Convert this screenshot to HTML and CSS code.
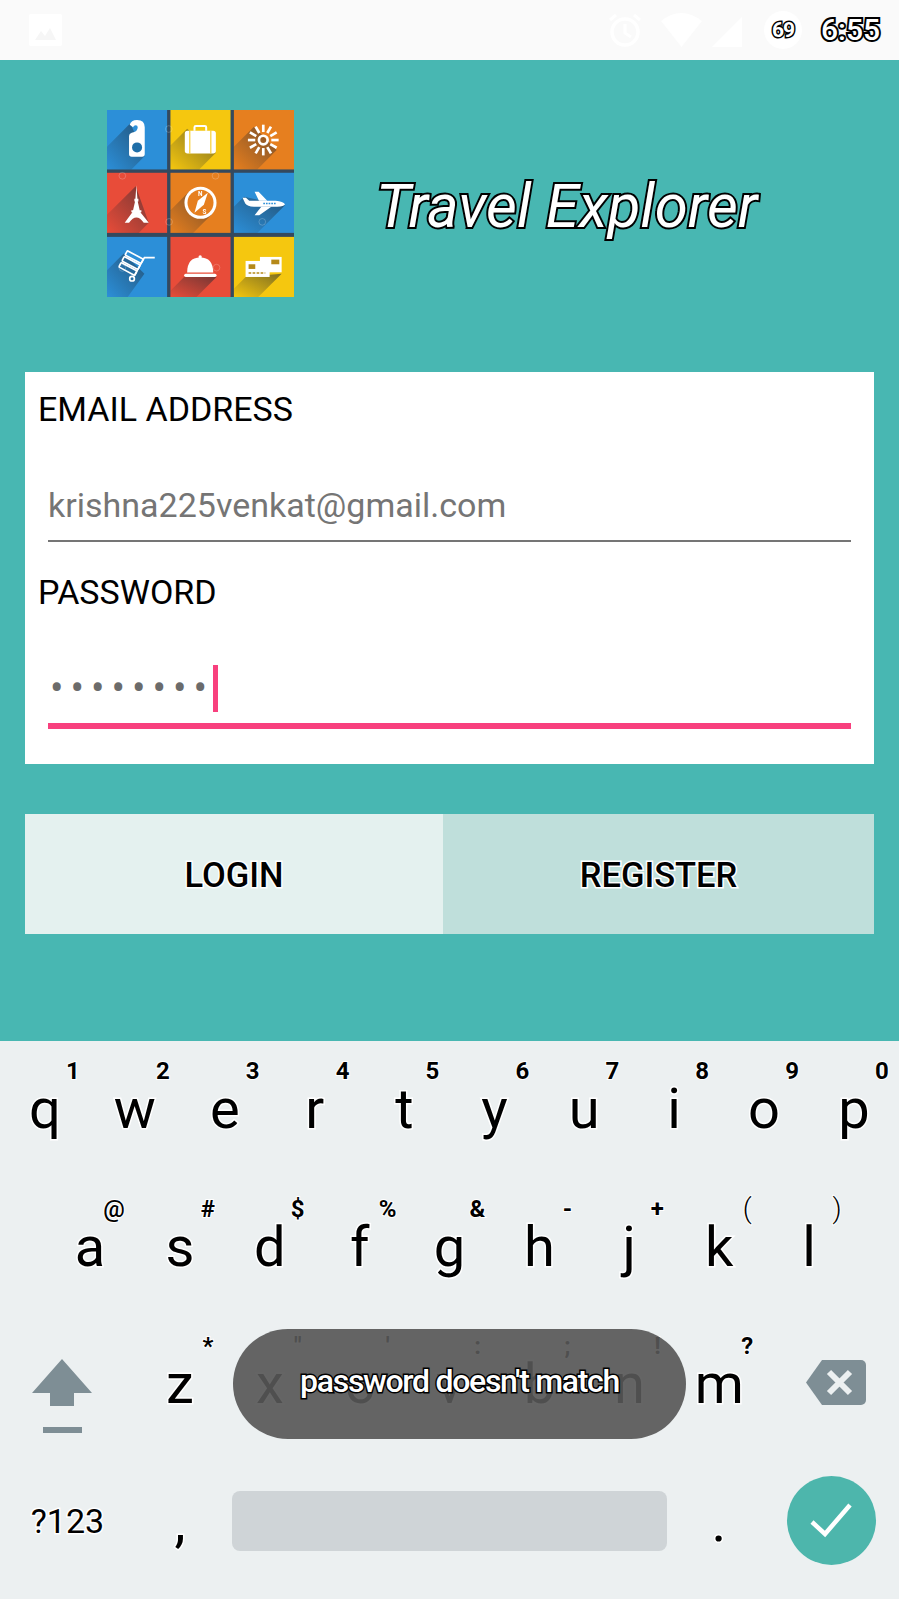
FILE: index.html
```html
<!DOCTYPE html>
<html lang="en">
<head>
<meta charset="utf-8">
<title>Travel Explorer</title>
<link rel="stylesheet" href="styles.css">
</head>
<body>
<div class="screen">
  <header class="status">
    <svg class="st-image" viewBox="0 0 33 32"><path fill="#fff" d="M2 0h29a2 2 0 0 1 2 2v28a2 2 0 0 1-2 2H2a2 2 0 0 1-2-2V2a2 2 0 0 1 2-2z"/><path fill="#f6f6f6" d="M6 26l6-9 4 5 5-8 6 12z"/></svg>
    <div class="st-right">
      <svg class="st-alarm" viewBox="0 0 36 36"><circle cx="18" cy="20" r="13" fill="none" stroke="#fff" stroke-width="3.5"/><path d="M18 12v9l6 4M3 8l6-5M33 8l-6-5" fill="none" stroke="#fff" stroke-width="3"/></svg>
      <svg class="st-wifi" viewBox="0 0 41 34"><path fill="#fff" d="M0 8Q20-8 41 8L20.500 34z"/></svg>
      <svg class="st-signal" viewBox="0 0 30 30"><path fill="#fff" d="M30 0v30H0z"/></svg>
      <span class="st-batt">69</span>
      <span class="st-time">6:55</span>
    </div>
  </header>

  <main class="app">
    <div class="brand">
      <svg class="logo" viewBox="0 0 560 560" role="img" aria-label="Travel icons">
        <defs>
          <linearGradient id="sh" x1="1" y1="0" x2="0" y2="1">
            <stop offset="0" stop-color="#1c2530" stop-opacity=".55"/>
            <stop offset="1" stop-color="#1c2530" stop-opacity="0"/>
          </linearGradient>
        </defs>
        <rect width="560" height="560" fill="#34495e"/>

        <g>
          <rect width="180" height="178" fill="#2c8fd8"/>
          <polygon points="70,40 0,110 0,178 73,178 113,138" fill="url(#sh)"/>
          <path fill="#fff" d="M68 44Q72 30 90 30Q113 30 113 52V132Q113 140 105 140H74Q66 140 66 132V78Q66 70 74 68Q92 66 92 52Q92 46 86 46Q80 46 78 52Z"/>
          <circle cx="90" cy="112" r="15" fill="#1f6ea8"/>
        </g>
        <g transform="translate(190 0)">
          <rect width="180" height="178" fill="#f5c70f"/>
          <polygon points="50,56 0,106 0,178 86,178 136,128" fill="url(#sh)"/>
          <path d="M72 62V52Q72 48 76 48H103Q107 48 107 52V62" fill="none" stroke="#fff" stroke-width="6"/>
          <rect x="43" y="62" width="93" height="68" rx="8" fill="#fff"/>
          <path d="M58 62v68M121 62v68" stroke="#f5c70f" stroke-width="3"/>
        </g>
        <g transform="translate(380 0)">
          <rect width="180" height="178" fill="#e67f1f"/>
          <polygon points="60,50 0,110 0,178 70,178 128,120" fill="url(#sh)"/>
          <circle cx="88" cy="90" r="13" fill="none" stroke="#fff" stroke-width="8"/>
          <g stroke="#fff" stroke-width="8">
            <path d="M88 66V44"/><path d="M88 114v22"/><path d="M64 90H42"/><path d="M112 90h22"/>
            <path d="M100 69l11-19"/><path d="M76 111l-11 19"/><path d="M67 78l-19-11"/><path d="M109 102l19 11"/>
            <path d="M76 69L65 50"/><path d="M100 111l11 19"/><path d="M67 102l-19 11"/><path d="M109 78l19-11"/>
          </g>
        </g>

        <g transform="translate(0 188)">
          <rect width="180" height="180" fill="#e84c39"/>
          <polygon points="86,40 0,126 0,180 95,180 125,150" fill="url(#sh)"/>
          <path fill="#fff" d="M88 37L91 78H94V86H92L98 112H103V118H100L125 150H110Q88 118 66 150H53L76 118H73V112H78L84 86H82V78H85Z"/>
        </g>
        <g transform="translate(190 188)">
          <rect width="180" height="180" fill="#e67f1f"/>
          <polygon points="56,56 0,112 0,180 68,180 124,124" fill="url(#sh)"/>
          <circle cx="90" cy="90" r="48" fill="#fff"/>
          <circle cx="90" cy="90" r="39" fill="#e67f1f"/>
          <polygon points="112,60 100,96 72,120 82,84" fill="#fff"/>
          <text class="logo-mark" x="89" y="71">N</text>
          <text class="logo-mark" x="102" y="124">S</text>
        </g>
        <g transform="translate(380 188)">
          <rect width="180" height="180" fill="#2c8fd8"/>
          <polygon points="30,72 0,102 0,180 70,180 153,97" fill="url(#sh)"/>
          <path fill="#fff" d="M26 75H36L46 84H125Q148 86 153 94Q150 100 130 102H60Q40 100 34 92Z"/>
          <path fill="#fff" d="M75 84L62 57H74L100 84ZM82 102L62 127H76L112 102Z"/>
          <path d="M88 92h40" stroke="#2c8fd8" stroke-width="5" stroke-dasharray="5 3"/>
        </g>

        <g transform="translate(0 380)">
          <rect width="180" height="180" fill="#2c8fd8"/>
          <polygon points="50,50 0,100 0,180 62,180 112,110" fill="url(#sh)"/>
          <g transform="rotate(28 70 80)" fill="none" stroke="#fff" stroke-width="5">
            <rect x="44" y="50" width="54" height="15" rx="3"/>
            <rect x="44" y="70" width="54" height="15" rx="3"/>
            <rect x="44" y="90" width="54" height="15" rx="3"/>
          </g>
          <path d="M143 62H112L82 116" fill="none" stroke="#fff" stroke-width="5"/>
          <circle cx="75" cy="125" r="7" fill="none" stroke="#fff" stroke-width="5"/>
        </g>
        <g transform="translate(190 380)">
          <rect width="180" height="180" fill="#e84c39"/>
          <polygon points="41,120 0,161 0,180 78,180 138,120" fill="url(#sh)"/>
          <circle cx="89" cy="60" r="5" fill="#fff"/>
          <path fill="#fff" d="M50 107Q50 62 89 62Q128 62 128 107Z"/>
          <rect x="41" y="110" width="97" height="10" rx="5" fill="#fff"/>
        </g>
        <g transform="translate(380 380)">
          <rect width="180" height="180" fill="#f5c70f"/>
          <polygon points="35,120 0,155 0,180 73,180 143,110" fill="url(#sh)"/>
          <rect x="78" y="60" width="65" height="46" fill="#fff"/>
          <rect x="112" y="68" width="24" height="14" fill="#b5891a"/>
          <rect x="35" y="72" width="72" height="48" fill="#fff"/>
          <rect x="44" y="82" width="20" height="14" fill="#b5891a"/>
          <path d="M44 108h50" stroke="#b5891a" stroke-width="4" stroke-dasharray="8 4"/>
        </g>

        <g fill="none" stroke="#fff" stroke-opacity=".3" stroke-width="2">
          <circle cx="185" cy="57" r="10"/><circle cx="46" cy="197" r="10"/><circle cx="325" cy="197" r="10"/>
          <circle cx="186" cy="335" r="10"/><circle cx="465" cy="335" r="10"/><circle cx="328" cy="472" r="10"/>
          <circle cx="46" cy="473" r="10"/>
        </g>
      </svg>
      <h1 class="title">Travel Explorer</h1>
    </div>

    <section class="card">
      <div class="label">EMAIL ADDRESS</div>
      <div class="field">krishna225venkat@gmail.com</div>
      <div class="label label-gap">PASSWORD</div>
      <div class="field field-active">
        <span class="dots">••••••••</span><span class="caret"></span>
      </div>
    </section>

    <div class="actions">
      <div class="btn btn-login">LOGIN</div>
      <div class="btn btn-register">REGISTER</div>
    </div>
  </main>

  <section class="keyboard">
    <div class="row">
      <div class="key">q<span class="hint">1</span></div>
      <div class="key">w<span class="hint">2</span></div>
      <div class="key">e<span class="hint">3</span></div>
      <div class="key">r<span class="hint">4</span></div>
      <div class="key">t<span class="hint">5</span></div>
      <div class="key">y<span class="hint">6</span></div>
      <div class="key">u<span class="hint">7</span></div>
      <div class="key">i<span class="hint">8</span></div>
      <div class="key">o<span class="hint">9</span></div>
      <div class="key">p<span class="hint">0</span></div>
    </div>
    <div class="row row-inset">
      <div class="key">a<span class="hint hint-sym">@</span></div>
      <div class="key">s<span class="hint">#</span></div>
      <div class="key">d<span class="hint">$</span></div>
      <div class="key">f<span class="hint">%</span></div>
      <div class="key">g<span class="hint">&amp;</span></div>
      <div class="key">h<span class="hint">-</span></div>
      <div class="key">j<span class="hint">+</span></div>
      <div class="key">k<span class="hint hint-thin">(</span></div>
      <div class="key">l<span class="hint hint-thin">)</span></div>
    </div>
    <div class="row">
      <div class="key-wide key-shift">
        <svg class="ic-shift" viewBox="0 0 60 74"><path fill="#7e8e95" d="M30 0l30 34H42v13H18V34H0z"/><rect x="11" y="68" width="39" height="6" fill="#7e8e95"/></svg>
      </div>
      <div class="key">z<span class="hint">*</span></div>
      <div class="key">x<span class="hint">"</span></div>
      <div class="key">c<span class="hint">'</span></div>
      <div class="key">v<span class="hint">:</span></div>
      <div class="key">b<span class="hint">;</span></div>
      <div class="key">n<span class="hint">!</span></div>
      <div class="key">m<span class="hint">?</span></div>
      <div class="key-wide key-back">
        <svg class="ic-back" viewBox="0 0 60 45"><path fill="#7e8e95" d="M16 0H55a5 5 0 0 1 5 5V40a5 5 0 0 1-5 5H16L0 22.500z"/><path d="M23 12l21 21M44 12L23 33" stroke="#ecf0f1" stroke-width="6"/></svg>
      </div>
    </div>
    <div class="row">
      <div class="key-wide key-sym">?123</div>
      <div class="key">,</div>
      <div class="spacebar"><div class="spacebar-fill"></div></div>
      <div class="key">.</div>
      <div class="key-wide key-enter">
        <div class="enter">
          <svg class="ic-check" viewBox="0 0 44 36"><path d="M3 20l13 12L41 3" fill="none" stroke="#fff" stroke-width="4.500"/></svg>
        </div>
      </div>
    </div>
    <div class="toast">password doesn't match</div>
  </section>
</div>
</body>
</html>
```
FILE: styles.css
```css
* { box-sizing: border-box; }
html, body { margin: 0; padding: 0; }
body { font-family: Roboto, "Liberation Sans", sans-serif; background: #48b7b2; }

.screen { width: 899px; height: 1599px; display: flex; flex-direction: column; overflow: hidden; }

/* status bar */
.status { height: 60px; flex: none; background: #fafafa; display: flex; align-items: center; justify-content: space-between; padding: 0 19px 0 29px; }
.st-image { width: 33px; height: 32px; }
.st-right { display: flex; align-items: center; }
.st-alarm { width: 36px; height: 36px; }
.st-wifi { width: 41px; height: 34px; margin-left: 18px; }
.st-signal { width: 30px; height: 30px; margin-left: 10px; margin-top: 4px; }
.st-batt { width: 38px; height: 38px; margin-left: 22px; border-radius: 50%; background: #fff; color: #fff; font-size: 21px; font-weight: 700; line-height: 38px; text-align: center; letter-spacing: -1px; -webkit-text-stroke: 3px #000; paint-order: stroke fill; }
.st-time { margin-left: 19px; color: #fff; font-size: 30px; font-weight: 500; line-height: 38px; -webkit-text-stroke: 4px #000; paint-order: stroke fill; }

/* app */
.app { flex: 1; background: #48b7b2; padding-top: 50px; }
.brand { display: flex; align-items: center; padding-left: 107px; }
.logo { width: 187px; height: 187px; flex: none; filter: blur(.4px); }
.logo-mark { fill: #fff; font-family: Roboto, sans-serif; font-size: 19px; font-weight: 700; text-anchor: middle; }
.title { margin: 7px 0 0 82px; color: #fff; font-size: 60px; font-weight: 400; font-style: italic; line-height: 66px; -webkit-text-stroke: 4px #000; paint-order: stroke fill; white-space: nowrap; }

.card { margin: 75px 25px 0; height: 392px; padding-top: 7px; background: #fff; }
.label { margin-left: 13px; font-size: 34px; line-height: 60px; color: #000; }
.label-gap { margin-top: 20px; }
.field { margin: 0 23px; padding: 41px 0 9px; height: 103px; border-bottom: 2px solid #757575; font-size: 34px; line-height: 51px; color: #757575; }
.field-active { display: flex; align-items: center; padding-left: 2px; padding-bottom: 9px; height: 107px; border-bottom: 6px solid #f8407e; }
.dots { font-size: 40px; line-height: 51px; letter-spacing: 7px; color: #6b6b6b; }
.caret { width: 5px; height: 47px; background: #f8407e; margin-left: -1px; }

.actions { display: flex; margin: 50px 25px 0; height: 120px; }
.btn { display: flex; align-items: center; justify-content: center; padding-top: 2px; color: #000; font-size: 34.500px; font-weight: 500; -webkit-text-stroke: 3px #fff; paint-order: stroke fill; }
.btn-login { width: 418px; background: #e4f1ef; }
.btn-register { flex: 1; background: #bfdfdb; }

/* keyboard */
.keyboard { position: relative; flex: none; height: 558px; background: #ecf0f1; color: #000; }
.row { display: flex; height: 137.500px; }
.row-inset { padding: 0 45px; }
.key { position: relative; flex: none; width: 89.900px; text-align: center; font-size: 56px; line-height: 137.500px; -webkit-text-stroke: 3px #fff; paint-order: stroke fill; }
.hint { position: absolute; left: calc(50% + 14px); top: 18px; width: 28px; text-align: center; font-size: 24px; font-weight: 700; line-height: 24px; -webkit-text-stroke: 2px #fff; }
.hint-sym { left: calc(50% + 10px); font-weight: 500; }
.hint-thin { font-weight: 300; font-size: 28px; }
.key-wide { flex: none; width: 135px; display: flex; align-items: center; justify-content: center; }
.key-shift { padding-right: 11px; }
.key-back { width: 134.700px; padding: 0 0 5px 8px; }
.key-sym { font-size: 34px; padding-bottom: 2px; -webkit-text-stroke: 3px #fff; paint-order: stroke fill; }
.key-enter { padding-bottom: 4px; }
.ic-shift { width: 60px; height: 74px; margin-top: 22px; }
.ic-back { width: 60px; height: 45px; }
.spacebar { flex: none; width: 449px; padding: 0 7px 2px; display: flex; align-items: center; }
.spacebar-fill { width: 100%; height: 60px; border-radius: 8px; background: #cfd4d7; }
.enter { width: 89px; height: 89px; border-radius: 50%; background: #4db6ac; display: flex; align-items: center; justify-content: center; }
.ic-check { width: 44px; height: 36px; }

.toast { position: absolute; left: 233px; top: 288px; width: 453px; height: 110px; border-radius: 55px; background: rgba(87, 87, 87, .915); color: #fff; font-size: 32px; font-weight: 500; letter-spacing: -1.300px; line-height: 104px; text-align: center; -webkit-text-stroke: 3px #000; paint-order: stroke fill; }
```
